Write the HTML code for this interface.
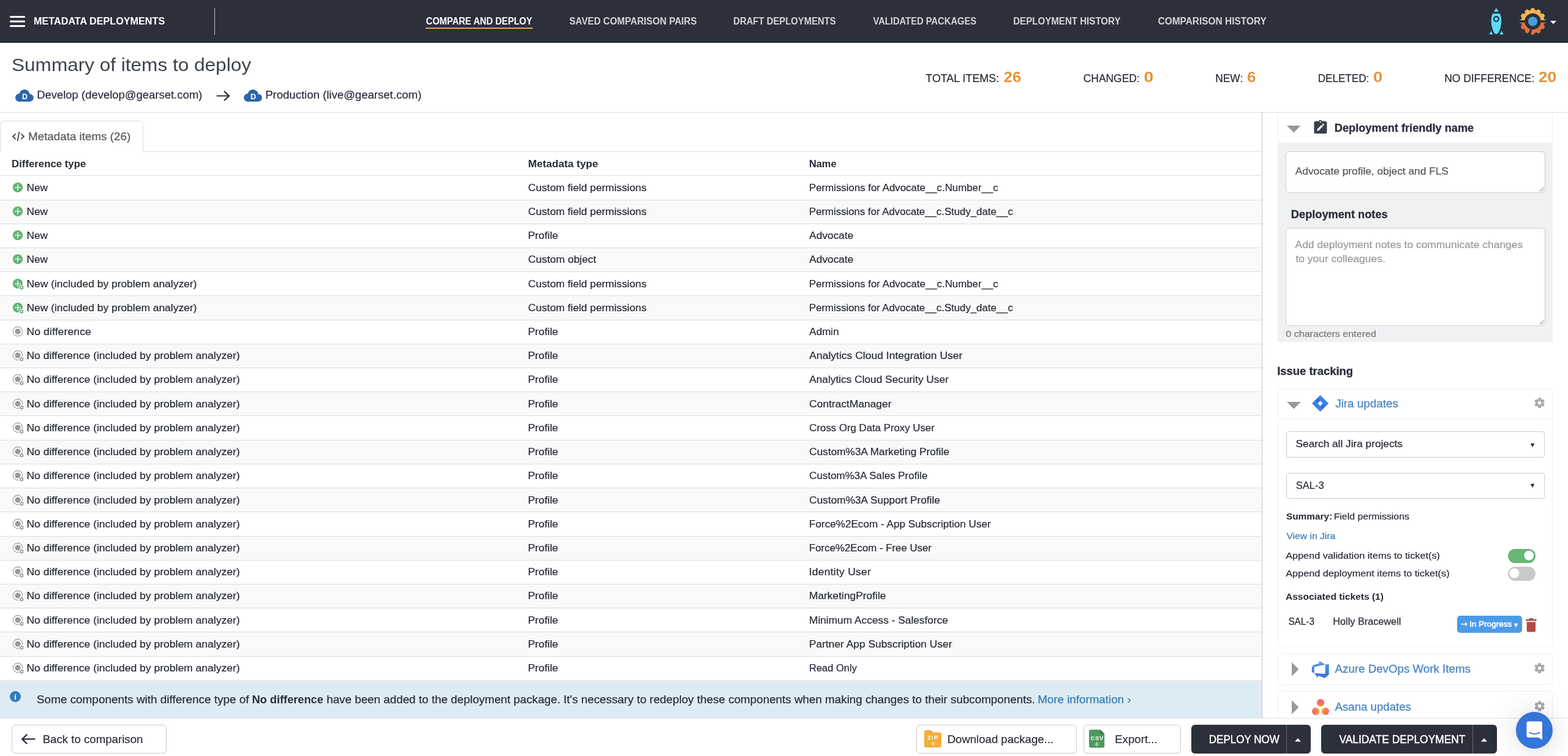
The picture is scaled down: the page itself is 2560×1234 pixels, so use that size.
<!DOCTYPE html>
<html lang="en">
<head>
<meta charset="utf-8">
<title>Summary of items to deploy</title>
<meta name="viewport" content="width=2560">
<style>
*{box-sizing:border-box}
html,body{margin:0;padding:0;background:#fff}
body{width:2560px;height:1234px;color:#262a33;
 font-family:"Liberation Sans",Arial,Helvetica,sans-serif;-webkit-font-smoothing:antialiased}
#app{position:relative;left:0;top:0;width:2560px;height:1234px;overflow:hidden;background:#fff}
nav,header,main,aside,footer,section{position:absolute;left:0;top:0;width:2560px;height:0;will-change:transform}
div,a.t,span.t,h1.t,h2.t,h3.t,p.t,label.t,button{position:absolute}
.t{white-space:nowrap;margin:0;padding:0;font-weight:400;text-decoration:none;color:inherit;transform-origin:0 50%}
.ic{position:absolute;display:block;overflow:visible}
.b{font-weight:700}
.btn{border:1px solid #ccc;border-radius:6px;background:#fff}
.dark{background:#2c303b;border-radius:6px}
.card{border:1px solid #efefef;border-radius:5px;background:#fff}
.field{border:1px solid #ccc;border-radius:6px;background:#fff}
.row{left:0;width:2060px;border-top:1px solid #ddd}
.alt{background:#f9f9f9}
</style>
</head>
<body>
<div id="app">
<main>
<div style="left:234px;top:247px;width:1826px;height:1px;background:#ddd;"></div>
<div style="left:0px;top:197px;width:234px;height:51px;border:1px solid #ddd;border-bottom:0;border-radius:6px 6px 0 0;background:#fff;"></div>
<svg class="ic" style="left:20px;top:215.2px;" width="20" height="16" viewBox="0 0 20 16" aria-hidden="true"><path d="M5.6 3.6 L0.9 7.8 L5.6 12 M11.4 0.2 L8.6 15.4 M14.4 3.6 L19.1 7.8 L14.4 12" fill="none" stroke="#3a3a3a" stroke-width="1.7"/></svg>
<span class="t" style="left:46px;top:212px;font-size:17.5px;line-height:22px;transform:translateX(0.05px) scaleX(1.0737);color:#555;-webkit-text-stroke-width:0.2px;">Metadata items (26)</span>
<span class="t" style="left:19px;top:258px;font-size:16px;line-height:20px;transform:translateX(0.05px) scaleX(1.0482);font-weight:700;color:#262a33;">Difference type</span>
<span class="t" style="left:862px;top:258px;font-size:16px;line-height:20px;transform:translateX(0.23px) scaleX(1.0705);font-weight:700;color:#262a33;">Metadata type</span>
<span class="t" style="left:1320px;top:258px;font-size:16px;line-height:20px;transform:translateX(0.88px) scaleX(1.0237);font-weight:700;color:#262a33;">Name</span>
<div class="row" style="left:0px;top:286px;width:2060px;height:40px;"></div>
<svg class="ic" style="left:20.1px;top:297px;" width="20" height="20" viewBox="0 0 20 20" aria-hidden="true"><circle cx="9" cy="9" r="8.1" fill="#5fb46f"/><path d="M9 4.7 V13.3 M4.7 9 H13.3" stroke="#fff" stroke-opacity="0.88" stroke-width="1.7" stroke-linecap="round"/></svg>
<span class="t" style="left:43px;top:297px;font-size:16px;line-height:20px;transform:translateX(0.47px) scaleX(1.0780);-webkit-text-stroke-width:0.2px;">New</span>
<span class="t" style="left:862px;top:297px;font-size:16px;line-height:20px;transform:translateX(0.32px) scaleX(1.0814);-webkit-text-stroke-width:0.2px;">Custom field permissions</span>
<span class="t" style="left:1321px;top:297px;font-size:16px;line-height:20px;transform:translateX(0.00px) scaleX(1.0519);-webkit-text-stroke-width:0.2px;">Permissions for Advocate__c.Number__c</span>
<div class="row alt" style="left:0px;top:326px;width:2060px;height:39px;"></div>
<svg class="ic" style="left:20.1px;top:336px;" width="20" height="20" viewBox="0 0 20 20" aria-hidden="true"><circle cx="9" cy="9" r="8.1" fill="#5fb46f"/><path d="M9 4.7 V13.3 M4.7 9 H13.3" stroke="#fff" stroke-opacity="0.88" stroke-width="1.7" stroke-linecap="round"/></svg>
<span class="t" style="left:43px;top:336px;font-size:16px;line-height:20px;transform:translateX(0.47px) scaleX(1.0780);-webkit-text-stroke-width:0.2px;">New</span>
<span class="t" style="left:862px;top:336px;font-size:16px;line-height:20px;transform:translateX(0.32px) scaleX(1.0814);-webkit-text-stroke-width:0.2px;">Custom field permissions</span>
<span class="t" style="left:1321px;top:336px;font-size:16px;line-height:20px;transform:translateX(0.01px) scaleX(1.0480);-webkit-text-stroke-width:0.2px;">Permissions for Advocate__c.Study_date__c</span>
<div class="row" style="left:0px;top:365px;width:2060px;height:39px;"></div>
<svg class="ic" style="left:20.1px;top:375px;" width="20" height="20" viewBox="0 0 20 20" aria-hidden="true"><circle cx="9" cy="9" r="8.1" fill="#5fb46f"/><path d="M9 4.7 V13.3 M4.7 9 H13.3" stroke="#fff" stroke-opacity="0.88" stroke-width="1.7" stroke-linecap="round"/></svg>
<span class="t" style="left:43px;top:375px;font-size:16px;line-height:20px;transform:translateX(0.47px) scaleX(1.0780);-webkit-text-stroke-width:0.2px;">New</span>
<span class="t" style="left:861px;top:375px;font-size:16px;line-height:20px;transform:translateX(0.96px) scaleX(1.0858);-webkit-text-stroke-width:0.2px;">Profile</span>
<span class="t" style="left:1321px;top:375px;font-size:16px;line-height:20px;transform:translateX(0.24px) scaleX(1.0805);-webkit-text-stroke-width:0.2px;">Advocate</span>
<div class="row alt" style="left:0px;top:404px;width:2060px;height:39px;"></div>
<svg class="ic" style="left:20.1px;top:414px;" width="20" height="20" viewBox="0 0 20 20" aria-hidden="true"><circle cx="9" cy="9" r="8.1" fill="#5fb46f"/><path d="M9 4.7 V13.3 M4.7 9 H13.3" stroke="#fff" stroke-opacity="0.88" stroke-width="1.7" stroke-linecap="round"/></svg>
<span class="t" style="left:43px;top:414px;font-size:16px;line-height:20px;transform:translateX(0.47px) scaleX(1.0780);-webkit-text-stroke-width:0.2px;">New</span>
<span class="t" style="left:862px;top:414px;font-size:16px;line-height:20px;transform:translateX(0.31px) scaleX(1.0860);-webkit-text-stroke-width:0.2px;">Custom object</span>
<span class="t" style="left:1321px;top:414px;font-size:16px;line-height:20px;transform:translateX(0.24px) scaleX(1.0805);-webkit-text-stroke-width:0.2px;">Advocate</span>
<div class="row" style="left:0px;top:443px;width:2060px;height:39px;"></div>
<svg class="ic" style="left:20.1px;top:454px;" width="20" height="20" viewBox="0 0 20 20" aria-hidden="true"><circle cx="9" cy="9" r="8.1" fill="#5fb46f"/><path d="M9 4.7 V13.3 M4.7 9 H13.3" stroke="#fff" stroke-opacity="0.88" stroke-width="1.7" stroke-linecap="round"/><circle cx="15.2" cy="15.2" r="4.4" fill="#fff"/><path d="M14.40 13.04 L14.47 11.98 L15.93 11.98 L16.00 13.04 L16.67 13.43 L17.62 12.96 L18.35 14.22 L17.47 14.81 L17.47 15.59 L18.35 16.18 L17.62 17.44 L16.67 16.97 L16.00 17.36 L15.93 18.42 L14.47 18.42 L14.40 17.36 L13.73 16.97 L12.78 17.44 L12.05 16.18 L12.93 15.59 L12.93 14.81 L12.05 14.22 L12.78 12.96 L13.73 13.43 Z" fill="#5fb46f" stroke="#5fb46f" stroke-width="0.7" stroke-linejoin="round"/><circle cx="15.2" cy="15.2" r="1.25" fill="#fff"/></svg>
<span class="t" style="left:43px;top:454px;font-size:16px;line-height:20px;transform:translateX(0.45px) scaleX(1.0890);-webkit-text-stroke-width:0.2px;">New (included by problem analyzer)</span>
<span class="t" style="left:862px;top:454px;font-size:16px;line-height:20px;transform:translateX(0.32px) scaleX(1.0814);-webkit-text-stroke-width:0.2px;">Custom field permissions</span>
<span class="t" style="left:1321px;top:454px;font-size:16px;line-height:20px;transform:translateX(0.00px) scaleX(1.0519);-webkit-text-stroke-width:0.2px;">Permissions for Advocate__c.Number__c</span>
<div class="row alt" style="left:0px;top:482px;width:2060px;height:40px;"></div>
<svg class="ic" style="left:20.1px;top:493px;" width="20" height="20" viewBox="0 0 20 20" aria-hidden="true"><circle cx="9" cy="9" r="8.1" fill="#5fb46f"/><path d="M9 4.7 V13.3 M4.7 9 H13.3" stroke="#fff" stroke-opacity="0.88" stroke-width="1.7" stroke-linecap="round"/><circle cx="15.2" cy="15.2" r="4.4" fill="#fff"/><path d="M14.40 13.04 L14.47 11.98 L15.93 11.98 L16.00 13.04 L16.67 13.43 L17.62 12.96 L18.35 14.22 L17.47 14.81 L17.47 15.59 L18.35 16.18 L17.62 17.44 L16.67 16.97 L16.00 17.36 L15.93 18.42 L14.47 18.42 L14.40 17.36 L13.73 16.97 L12.78 17.44 L12.05 16.18 L12.93 15.59 L12.93 14.81 L12.05 14.22 L12.78 12.96 L13.73 13.43 Z" fill="#5fb46f" stroke="#5fb46f" stroke-width="0.7" stroke-linejoin="round"/><circle cx="15.2" cy="15.2" r="1.25" fill="#fff"/></svg>
<span class="t" style="left:43px;top:493px;font-size:16px;line-height:20px;transform:translateX(0.45px) scaleX(1.0890);-webkit-text-stroke-width:0.2px;">New (included by problem analyzer)</span>
<span class="t" style="left:862px;top:493px;font-size:16px;line-height:20px;transform:translateX(0.32px) scaleX(1.0814);-webkit-text-stroke-width:0.2px;">Custom field permissions</span>
<span class="t" style="left:1321px;top:493px;font-size:16px;line-height:20px;transform:translateX(0.01px) scaleX(1.0480);-webkit-text-stroke-width:0.2px;">Permissions for Advocate__c.Study_date__c</span>
<div class="row" style="left:0px;top:522px;width:2060px;height:39px;"></div>
<svg class="ic" style="left:20.1px;top:532px;" width="20" height="20" viewBox="0 0 20 20" aria-hidden="true"><circle cx="9" cy="9" r="7.6" fill="#fff" stroke="#9a9a9a" stroke-width="1.1"/><circle cx="9" cy="9" r="4.6" fill="#9a9a9a"/></svg>
<span class="t" style="left:43px;top:532px;font-size:16px;line-height:20px;letter-spacing:0.080px;transform:translateX(0.44px) scaleX(1.1000);-webkit-text-stroke-width:0.2px;">No difference</span>
<span class="t" style="left:861px;top:532px;font-size:16px;line-height:20px;transform:translateX(0.96px) scaleX(1.0858);-webkit-text-stroke-width:0.2px;">Profile</span>
<span class="t" style="left:1321px;top:532px;font-size:16px;line-height:20px;transform:translateX(0.24px) scaleX(1.0677);-webkit-text-stroke-width:0.2px;">Admin</span>
<div class="row alt" style="left:0px;top:561px;width:2060px;height:39px;"></div>
<svg class="ic" style="left:20.1px;top:571px;" width="20" height="20" viewBox="0 0 20 20" aria-hidden="true"><circle cx="9" cy="9" r="7.6" fill="#fff" stroke="#9a9a9a" stroke-width="1.1"/><circle cx="9" cy="9" r="4.6" fill="#9a9a9a"/><circle cx="15.2" cy="15.2" r="4.4" fill="#fff"/><path d="M14.40 13.04 L14.47 11.98 L15.93 11.98 L16.00 13.04 L16.67 13.43 L17.62 12.96 L18.35 14.22 L17.47 14.81 L17.47 15.59 L18.35 16.18 L17.62 17.44 L16.67 16.97 L16.00 17.36 L15.93 18.42 L14.47 18.42 L14.40 17.36 L13.73 16.97 L12.78 17.44 L12.05 16.18 L12.93 15.59 L12.93 14.81 L12.05 14.22 L12.78 12.96 L13.73 13.43 Z" fill="#9a9a9a" stroke="#9a9a9a" stroke-width="0.7" stroke-linejoin="round"/><circle cx="15.2" cy="15.2" r="1.25" fill="#fff"/></svg>
<span class="t" style="left:43px;top:571px;font-size:16px;line-height:20px;transform:translateX(0.44px) scaleX(1.0945);-webkit-text-stroke-width:0.2px;">No difference (included by problem analyzer)</span>
<span class="t" style="left:861px;top:571px;font-size:16px;line-height:20px;transform:translateX(0.96px) scaleX(1.0858);-webkit-text-stroke-width:0.2px;">Profile</span>
<span class="t" style="left:1321px;top:571px;font-size:16px;line-height:20px;transform:translateX(0.23px) scaleX(1.0944);-webkit-text-stroke-width:0.2px;">Analytics Cloud Integration User</span>
<div class="row" style="left:0px;top:600px;width:2060px;height:39px;"></div>
<svg class="ic" style="left:20.1px;top:610px;" width="20" height="20" viewBox="0 0 20 20" aria-hidden="true"><circle cx="9" cy="9" r="7.6" fill="#fff" stroke="#9a9a9a" stroke-width="1.1"/><circle cx="9" cy="9" r="4.6" fill="#9a9a9a"/><circle cx="15.2" cy="15.2" r="4.4" fill="#fff"/><path d="M14.40 13.04 L14.47 11.98 L15.93 11.98 L16.00 13.04 L16.67 13.43 L17.62 12.96 L18.35 14.22 L17.47 14.81 L17.47 15.59 L18.35 16.18 L17.62 17.44 L16.67 16.97 L16.00 17.36 L15.93 18.42 L14.47 18.42 L14.40 17.36 L13.73 16.97 L12.78 17.44 L12.05 16.18 L12.93 15.59 L12.93 14.81 L12.05 14.22 L12.78 12.96 L13.73 13.43 Z" fill="#9a9a9a" stroke="#9a9a9a" stroke-width="0.7" stroke-linejoin="round"/><circle cx="15.2" cy="15.2" r="1.25" fill="#fff"/></svg>
<span class="t" style="left:43px;top:610px;font-size:16px;line-height:20px;transform:translateX(0.44px) scaleX(1.0945);-webkit-text-stroke-width:0.2px;">No difference (included by problem analyzer)</span>
<span class="t" style="left:861px;top:610px;font-size:16px;line-height:20px;transform:translateX(0.96px) scaleX(1.0858);-webkit-text-stroke-width:0.2px;">Profile</span>
<span class="t" style="left:1321px;top:610px;font-size:16px;line-height:20px;transform:translateX(0.24px) scaleX(1.0798);-webkit-text-stroke-width:0.2px;">Analytics Cloud Security User</span>
<div class="row alt" style="left:0px;top:639px;width:2060px;height:39px;"></div>
<svg class="ic" style="left:20.1px;top:650px;" width="20" height="20" viewBox="0 0 20 20" aria-hidden="true"><circle cx="9" cy="9" r="7.6" fill="#fff" stroke="#9a9a9a" stroke-width="1.1"/><circle cx="9" cy="9" r="4.6" fill="#9a9a9a"/><circle cx="15.2" cy="15.2" r="4.4" fill="#fff"/><path d="M14.40 13.04 L14.47 11.98 L15.93 11.98 L16.00 13.04 L16.67 13.43 L17.62 12.96 L18.35 14.22 L17.47 14.81 L17.47 15.59 L18.35 16.18 L17.62 17.44 L16.67 16.97 L16.00 17.36 L15.93 18.42 L14.47 18.42 L14.40 17.36 L13.73 16.97 L12.78 17.44 L12.05 16.18 L12.93 15.59 L12.93 14.81 L12.05 14.22 L12.78 12.96 L13.73 13.43 Z" fill="#9a9a9a" stroke="#9a9a9a" stroke-width="0.7" stroke-linejoin="round"/><circle cx="15.2" cy="15.2" r="1.25" fill="#fff"/></svg>
<span class="t" style="left:43px;top:650px;font-size:16px;line-height:20px;transform:translateX(0.44px) scaleX(1.0945);-webkit-text-stroke-width:0.2px;">No difference (included by problem analyzer)</span>
<span class="t" style="left:861px;top:650px;font-size:16px;line-height:20px;transform:translateX(0.96px) scaleX(1.0858);-webkit-text-stroke-width:0.2px;">Profile</span>
<span class="t" style="left:1321px;top:650px;font-size:16px;line-height:20px;transform:translateX(0.32px) scaleX(1.0849);-webkit-text-stroke-width:0.2px;">ContractManager</span>
<div class="row" style="left:0px;top:678px;width:2060px;height:40px;"></div>
<svg class="ic" style="left:20.1px;top:689px;" width="20" height="20" viewBox="0 0 20 20" aria-hidden="true"><circle cx="9" cy="9" r="7.6" fill="#fff" stroke="#9a9a9a" stroke-width="1.1"/><circle cx="9" cy="9" r="4.6" fill="#9a9a9a"/><circle cx="15.2" cy="15.2" r="4.4" fill="#fff"/><path d="M14.40 13.04 L14.47 11.98 L15.93 11.98 L16.00 13.04 L16.67 13.43 L17.62 12.96 L18.35 14.22 L17.47 14.81 L17.47 15.59 L18.35 16.18 L17.62 17.44 L16.67 16.97 L16.00 17.36 L15.93 18.42 L14.47 18.42 L14.40 17.36 L13.73 16.97 L12.78 17.44 L12.05 16.18 L12.93 15.59 L12.93 14.81 L12.05 14.22 L12.78 12.96 L13.73 13.43 Z" fill="#9a9a9a" stroke="#9a9a9a" stroke-width="0.7" stroke-linejoin="round"/><circle cx="15.2" cy="15.2" r="1.25" fill="#fff"/></svg>
<span class="t" style="left:43px;top:689px;font-size:16px;line-height:20px;transform:translateX(0.44px) scaleX(1.0945);-webkit-text-stroke-width:0.2px;">No difference (included by problem analyzer)</span>
<span class="t" style="left:861px;top:689px;font-size:16px;line-height:20px;transform:translateX(0.96px) scaleX(1.0858);-webkit-text-stroke-width:0.2px;">Profile</span>
<span class="t" style="left:1321px;top:689px;font-size:16px;line-height:20px;transform:translateX(0.35px) scaleX(1.0498);-webkit-text-stroke-width:0.2px;">Cross Org Data Proxy User</span>
<div class="row alt" style="left:0px;top:718px;width:2060px;height:39px;"></div>
<svg class="ic" style="left:20.1px;top:728px;" width="20" height="20" viewBox="0 0 20 20" aria-hidden="true"><circle cx="9" cy="9" r="7.6" fill="#fff" stroke="#9a9a9a" stroke-width="1.1"/><circle cx="9" cy="9" r="4.6" fill="#9a9a9a"/><circle cx="15.2" cy="15.2" r="4.4" fill="#fff"/><path d="M14.40 13.04 L14.47 11.98 L15.93 11.98 L16.00 13.04 L16.67 13.43 L17.62 12.96 L18.35 14.22 L17.47 14.81 L17.47 15.59 L18.35 16.18 L17.62 17.44 L16.67 16.97 L16.00 17.36 L15.93 18.42 L14.47 18.42 L14.40 17.36 L13.73 16.97 L12.78 17.44 L12.05 16.18 L12.93 15.59 L12.93 14.81 L12.05 14.22 L12.78 12.96 L13.73 13.43 Z" fill="#9a9a9a" stroke="#9a9a9a" stroke-width="0.7" stroke-linejoin="round"/><circle cx="15.2" cy="15.2" r="1.25" fill="#fff"/></svg>
<span class="t" style="left:43px;top:728px;font-size:16px;line-height:20px;transform:translateX(0.44px) scaleX(1.0945);-webkit-text-stroke-width:0.2px;">No difference (included by problem analyzer)</span>
<span class="t" style="left:861px;top:728px;font-size:16px;line-height:20px;transform:translateX(0.96px) scaleX(1.0858);-webkit-text-stroke-width:0.2px;">Profile</span>
<span class="t" style="left:1321px;top:728px;font-size:16px;line-height:20px;transform:translateX(0.32px) scaleX(1.0751);-webkit-text-stroke-width:0.2px;">Custom%3A Marketing Profile</span>
<div class="row" style="left:0px;top:757px;width:2060px;height:39px;"></div>
<svg class="ic" style="left:20.1px;top:767px;" width="20" height="20" viewBox="0 0 20 20" aria-hidden="true"><circle cx="9" cy="9" r="7.6" fill="#fff" stroke="#9a9a9a" stroke-width="1.1"/><circle cx="9" cy="9" r="4.6" fill="#9a9a9a"/><circle cx="15.2" cy="15.2" r="4.4" fill="#fff"/><path d="M14.40 13.04 L14.47 11.98 L15.93 11.98 L16.00 13.04 L16.67 13.43 L17.62 12.96 L18.35 14.22 L17.47 14.81 L17.47 15.59 L18.35 16.18 L17.62 17.44 L16.67 16.97 L16.00 17.36 L15.93 18.42 L14.47 18.42 L14.40 17.36 L13.73 16.97 L12.78 17.44 L12.05 16.18 L12.93 15.59 L12.93 14.81 L12.05 14.22 L12.78 12.96 L13.73 13.43 Z" fill="#9a9a9a" stroke="#9a9a9a" stroke-width="0.7" stroke-linejoin="round"/><circle cx="15.2" cy="15.2" r="1.25" fill="#fff"/></svg>
<span class="t" style="left:43px;top:767px;font-size:16px;line-height:20px;transform:translateX(0.44px) scaleX(1.0945);-webkit-text-stroke-width:0.2px;">No difference (included by problem analyzer)</span>
<span class="t" style="left:861px;top:767px;font-size:16px;line-height:20px;transform:translateX(0.96px) scaleX(1.0858);-webkit-text-stroke-width:0.2px;">Profile</span>
<span class="t" style="left:1321px;top:767px;font-size:16px;line-height:20px;transform:translateX(0.34px) scaleX(1.0586);-webkit-text-stroke-width:0.2px;">Custom%3A Sales Profile</span>
<div class="row alt" style="left:0px;top:796px;width:2060px;height:39px;"></div>
<svg class="ic" style="left:20.1px;top:807px;" width="20" height="20" viewBox="0 0 20 20" aria-hidden="true"><circle cx="9" cy="9" r="7.6" fill="#fff" stroke="#9a9a9a" stroke-width="1.1"/><circle cx="9" cy="9" r="4.6" fill="#9a9a9a"/><circle cx="15.2" cy="15.2" r="4.4" fill="#fff"/><path d="M14.40 13.04 L14.47 11.98 L15.93 11.98 L16.00 13.04 L16.67 13.43 L17.62 12.96 L18.35 14.22 L17.47 14.81 L17.47 15.59 L18.35 16.18 L17.62 17.44 L16.67 16.97 L16.00 17.36 L15.93 18.42 L14.47 18.42 L14.40 17.36 L13.73 16.97 L12.78 17.44 L12.05 16.18 L12.93 15.59 L12.93 14.81 L12.05 14.22 L12.78 12.96 L13.73 13.43 Z" fill="#9a9a9a" stroke="#9a9a9a" stroke-width="0.7" stroke-linejoin="round"/><circle cx="15.2" cy="15.2" r="1.25" fill="#fff"/></svg>
<span class="t" style="left:43px;top:807px;font-size:16px;line-height:20px;transform:translateX(0.44px) scaleX(1.0945);-webkit-text-stroke-width:0.2px;">No difference (included by problem analyzer)</span>
<span class="t" style="left:861px;top:807px;font-size:16px;line-height:20px;transform:translateX(0.96px) scaleX(1.0858);-webkit-text-stroke-width:0.2px;">Profile</span>
<span class="t" style="left:1321px;top:807px;font-size:16px;line-height:20px;transform:translateX(0.32px) scaleX(1.0767);-webkit-text-stroke-width:0.2px;">Custom%3A Support Profile</span>
<div class="row" style="left:0px;top:835px;width:2060px;height:40px;"></div>
<svg class="ic" style="left:20.1px;top:846px;" width="20" height="20" viewBox="0 0 20 20" aria-hidden="true"><circle cx="9" cy="9" r="7.6" fill="#fff" stroke="#9a9a9a" stroke-width="1.1"/><circle cx="9" cy="9" r="4.6" fill="#9a9a9a"/><circle cx="15.2" cy="15.2" r="4.4" fill="#fff"/><path d="M14.40 13.04 L14.47 11.98 L15.93 11.98 L16.00 13.04 L16.67 13.43 L17.62 12.96 L18.35 14.22 L17.47 14.81 L17.47 15.59 L18.35 16.18 L17.62 17.44 L16.67 16.97 L16.00 17.36 L15.93 18.42 L14.47 18.42 L14.40 17.36 L13.73 16.97 L12.78 17.44 L12.05 16.18 L12.93 15.59 L12.93 14.81 L12.05 14.22 L12.78 12.96 L13.73 13.43 Z" fill="#9a9a9a" stroke="#9a9a9a" stroke-width="0.7" stroke-linejoin="round"/><circle cx="15.2" cy="15.2" r="1.25" fill="#fff"/></svg>
<span class="t" style="left:43px;top:846px;font-size:16px;line-height:20px;transform:translateX(0.44px) scaleX(1.0945);-webkit-text-stroke-width:0.2px;">No difference (included by problem analyzer)</span>
<span class="t" style="left:861px;top:846px;font-size:16px;line-height:20px;transform:translateX(0.96px) scaleX(1.0858);-webkit-text-stroke-width:0.2px;">Profile</span>
<span class="t" style="left:1320px;top:846px;font-size:16px;line-height:20px;transform:translateX(0.98px) scaleX(1.0696);-webkit-text-stroke-width:0.2px;">Force%2Ecom - App Subscription User</span>
<div class="row alt" style="left:0px;top:875px;width:2060px;height:39px;"></div>
<svg class="ic" style="left:20.1px;top:885px;" width="20" height="20" viewBox="0 0 20 20" aria-hidden="true"><circle cx="9" cy="9" r="7.6" fill="#fff" stroke="#9a9a9a" stroke-width="1.1"/><circle cx="9" cy="9" r="4.6" fill="#9a9a9a"/><circle cx="15.2" cy="15.2" r="4.4" fill="#fff"/><path d="M14.40 13.04 L14.47 11.98 L15.93 11.98 L16.00 13.04 L16.67 13.43 L17.62 12.96 L18.35 14.22 L17.47 14.81 L17.47 15.59 L18.35 16.18 L17.62 17.44 L16.67 16.97 L16.00 17.36 L15.93 18.42 L14.47 18.42 L14.40 17.36 L13.73 16.97 L12.78 17.44 L12.05 16.18 L12.93 15.59 L12.93 14.81 L12.05 14.22 L12.78 12.96 L13.73 13.43 Z" fill="#9a9a9a" stroke="#9a9a9a" stroke-width="0.7" stroke-linejoin="round"/><circle cx="15.2" cy="15.2" r="1.25" fill="#fff"/></svg>
<span class="t" style="left:43px;top:885px;font-size:16px;line-height:20px;transform:translateX(0.44px) scaleX(1.0945);-webkit-text-stroke-width:0.2px;">No difference (included by problem analyzer)</span>
<span class="t" style="left:861px;top:885px;font-size:16px;line-height:20px;transform:translateX(0.96px) scaleX(1.0858);-webkit-text-stroke-width:0.2px;">Profile</span>
<span class="t" style="left:1321px;top:885px;font-size:16px;line-height:20px;transform:translateX(0.00px) scaleX(1.0508);-webkit-text-stroke-width:0.2px;">Force%2Ecom - Free User</span>
<div class="row" style="left:0px;top:914px;width:2060px;height:39px;"></div>
<svg class="ic" style="left:20.1px;top:924px;" width="20" height="20" viewBox="0 0 20 20" aria-hidden="true"><circle cx="9" cy="9" r="7.6" fill="#fff" stroke="#9a9a9a" stroke-width="1.1"/><circle cx="9" cy="9" r="4.6" fill="#9a9a9a"/><circle cx="15.2" cy="15.2" r="4.4" fill="#fff"/><path d="M14.40 13.04 L14.47 11.98 L15.93 11.98 L16.00 13.04 L16.67 13.43 L17.62 12.96 L18.35 14.22 L17.47 14.81 L17.47 15.59 L18.35 16.18 L17.62 17.44 L16.67 16.97 L16.00 17.36 L15.93 18.42 L14.47 18.42 L14.40 17.36 L13.73 16.97 L12.78 17.44 L12.05 16.18 L12.93 15.59 L12.93 14.81 L12.05 14.22 L12.78 12.96 L13.73 13.43 Z" fill="#9a9a9a" stroke="#9a9a9a" stroke-width="0.7" stroke-linejoin="round"/><circle cx="15.2" cy="15.2" r="1.25" fill="#fff"/></svg>
<span class="t" style="left:43px;top:924px;font-size:16px;line-height:20px;transform:translateX(0.44px) scaleX(1.0945);-webkit-text-stroke-width:0.2px;">No difference (included by problem analyzer)</span>
<span class="t" style="left:861px;top:924px;font-size:16px;line-height:20px;transform:translateX(0.96px) scaleX(1.0858);-webkit-text-stroke-width:0.2px;">Profile</span>
<span class="t" style="left:1320px;top:924px;font-size:16px;line-height:20px;letter-spacing:0.177px;transform:translateX(0.75px) scaleX(1.1000);-webkit-text-stroke-width:0.2px;">Identity User</span>
<div class="row alt" style="left:0px;top:953px;width:2060px;height:39px;"></div>
<svg class="ic" style="left:20.1px;top:963px;" width="20" height="20" viewBox="0 0 20 20" aria-hidden="true"><circle cx="9" cy="9" r="7.6" fill="#fff" stroke="#9a9a9a" stroke-width="1.1"/><circle cx="9" cy="9" r="4.6" fill="#9a9a9a"/><circle cx="15.2" cy="15.2" r="4.4" fill="#fff"/><path d="M14.40 13.04 L14.47 11.98 L15.93 11.98 L16.00 13.04 L16.67 13.43 L17.62 12.96 L18.35 14.22 L17.47 14.81 L17.47 15.59 L18.35 16.18 L17.62 17.44 L16.67 16.97 L16.00 17.36 L15.93 18.42 L14.47 18.42 L14.40 17.36 L13.73 16.97 L12.78 17.44 L12.05 16.18 L12.93 15.59 L12.93 14.81 L12.05 14.22 L12.78 12.96 L13.73 13.43 Z" fill="#9a9a9a" stroke="#9a9a9a" stroke-width="0.7" stroke-linejoin="round"/><circle cx="15.2" cy="15.2" r="1.25" fill="#fff"/></svg>
<span class="t" style="left:43px;top:963px;font-size:16px;line-height:20px;transform:translateX(0.44px) scaleX(1.0945);-webkit-text-stroke-width:0.2px;">No difference (included by problem analyzer)</span>
<span class="t" style="left:861px;top:963px;font-size:16px;line-height:20px;transform:translateX(0.96px) scaleX(1.0858);-webkit-text-stroke-width:0.2px;">Profile</span>
<span class="t" style="left:1320px;top:963px;font-size:16px;line-height:20px;transform:translateX(0.96px) scaleX(1.0852);-webkit-text-stroke-width:0.2px;">MarketingProfile</span>
<div class="row" style="left:0px;top:992px;width:2060px;height:39px;"></div>
<svg class="ic" style="left:20.1px;top:1003px;" width="20" height="20" viewBox="0 0 20 20" aria-hidden="true"><circle cx="9" cy="9" r="7.6" fill="#fff" stroke="#9a9a9a" stroke-width="1.1"/><circle cx="9" cy="9" r="4.6" fill="#9a9a9a"/><circle cx="15.2" cy="15.2" r="4.4" fill="#fff"/><path d="M14.40 13.04 L14.47 11.98 L15.93 11.98 L16.00 13.04 L16.67 13.43 L17.62 12.96 L18.35 14.22 L17.47 14.81 L17.47 15.59 L18.35 16.18 L17.62 17.44 L16.67 16.97 L16.00 17.36 L15.93 18.42 L14.47 18.42 L14.40 17.36 L13.73 16.97 L12.78 17.44 L12.05 16.18 L12.93 15.59 L12.93 14.81 L12.05 14.22 L12.78 12.96 L13.73 13.43 Z" fill="#9a9a9a" stroke="#9a9a9a" stroke-width="0.7" stroke-linejoin="round"/><circle cx="15.2" cy="15.2" r="1.25" fill="#fff"/></svg>
<span class="t" style="left:43px;top:1003px;font-size:16px;line-height:20px;transform:translateX(0.44px) scaleX(1.0945);-webkit-text-stroke-width:0.2px;">No difference (included by problem analyzer)</span>
<span class="t" style="left:861px;top:1003px;font-size:16px;line-height:20px;transform:translateX(0.96px) scaleX(1.0858);-webkit-text-stroke-width:0.2px;">Profile</span>
<span class="t" style="left:1320px;top:1003px;font-size:16px;line-height:20px;transform:translateX(0.96px) scaleX(1.0820);-webkit-text-stroke-width:0.2px;">Minimum Access - Salesforce</span>
<div class="row alt" style="left:0px;top:1031px;width:2060px;height:40px;"></div>
<svg class="ic" style="left:20.1px;top:1042px;" width="20" height="20" viewBox="0 0 20 20" aria-hidden="true"><circle cx="9" cy="9" r="7.6" fill="#fff" stroke="#9a9a9a" stroke-width="1.1"/><circle cx="9" cy="9" r="4.6" fill="#9a9a9a"/><circle cx="15.2" cy="15.2" r="4.4" fill="#fff"/><path d="M14.40 13.04 L14.47 11.98 L15.93 11.98 L16.00 13.04 L16.67 13.43 L17.62 12.96 L18.35 14.22 L17.47 14.81 L17.47 15.59 L18.35 16.18 L17.62 17.44 L16.67 16.97 L16.00 17.36 L15.93 18.42 L14.47 18.42 L14.40 17.36 L13.73 16.97 L12.78 17.44 L12.05 16.18 L12.93 15.59 L12.93 14.81 L12.05 14.22 L12.78 12.96 L13.73 13.43 Z" fill="#9a9a9a" stroke="#9a9a9a" stroke-width="0.7" stroke-linejoin="round"/><circle cx="15.2" cy="15.2" r="1.25" fill="#fff"/></svg>
<span class="t" style="left:43px;top:1042px;font-size:16px;line-height:20px;transform:translateX(0.44px) scaleX(1.0945);-webkit-text-stroke-width:0.2px;">No difference (included by problem analyzer)</span>
<span class="t" style="left:861px;top:1042px;font-size:16px;line-height:20px;transform:translateX(0.96px) scaleX(1.0858);-webkit-text-stroke-width:0.2px;">Profile</span>
<span class="t" style="left:1320px;top:1042px;font-size:16px;line-height:20px;transform:translateX(0.96px) scaleX(1.0847);-webkit-text-stroke-width:0.2px;">Partner App Subscription User</span>
<div class="row" style="left:0px;top:1071px;width:2060px;height:39px;"></div>
<svg class="ic" style="left:20.1px;top:1081px;" width="20" height="20" viewBox="0 0 20 20" aria-hidden="true"><circle cx="9" cy="9" r="7.6" fill="#fff" stroke="#9a9a9a" stroke-width="1.1"/><circle cx="9" cy="9" r="4.6" fill="#9a9a9a"/><circle cx="15.2" cy="15.2" r="4.4" fill="#fff"/><path d="M14.40 13.04 L14.47 11.98 L15.93 11.98 L16.00 13.04 L16.67 13.43 L17.62 12.96 L18.35 14.22 L17.47 14.81 L17.47 15.59 L18.35 16.18 L17.62 17.44 L16.67 16.97 L16.00 17.36 L15.93 18.42 L14.47 18.42 L14.40 17.36 L13.73 16.97 L12.78 17.44 L12.05 16.18 L12.93 15.59 L12.93 14.81 L12.05 14.22 L12.78 12.96 L13.73 13.43 Z" fill="#9a9a9a" stroke="#9a9a9a" stroke-width="0.7" stroke-linejoin="round"/><circle cx="15.2" cy="15.2" r="1.25" fill="#fff"/></svg>
<span class="t" style="left:43px;top:1081px;font-size:16px;line-height:20px;transform:translateX(0.44px) scaleX(1.0945);-webkit-text-stroke-width:0.2px;">No difference (included by problem analyzer)</span>
<span class="t" style="left:861px;top:1081px;font-size:16px;line-height:20px;transform:translateX(0.96px) scaleX(1.0858);-webkit-text-stroke-width:0.2px;">Profile</span>
<span class="t" style="left:1321px;top:1081px;font-size:16px;line-height:20px;transform:translateX(0.03px) scaleX(1.0304);-webkit-text-stroke-width:0.2px;">Read Only</span>
<div style="left:0px;top:1110px;width:2060px;height:1px;background:#ddd;"></div>
<div style="left:0px;top:1111px;width:2060px;height:1px;background:#f3f8fb;"></div>
<div style="left:0px;top:1112px;width:2060px;height:60.5px;background:#ddebf4;"></div>
<svg class="ic" style="left:16px;top:1128px;" width="18" height="18" viewBox="0 0 18 18" aria-hidden="true"><circle cx="9" cy="9" r="9" fill="#2f7dbf"/><text x="9" y="13.6" text-anchor="middle" font-family="Liberation Sans, sans-serif" font-weight="700" font-size="13" fill="#fff">i</text></svg>
<span class="t" style="left:60px;top:1131px;font-size:18px;line-height:22px;transform:translateX(0.01px) scaleX(1.0503);color:#262a33;-webkit-text-stroke-width:0.2px;">Some components with difference type of</span>
<span class="t" style="left:411px;top:1131px;font-size:18px;line-height:22px;transform:translateX(0.46px) scaleX(1.0121);font-weight:700;color:#2b2e3a;">No difference</span>
<span class="t" style="left:533px;top:1131px;font-size:18px;line-height:22px;transform:translateX(0.18px) scaleX(1.0449);color:#262a33;-webkit-text-stroke-width:0.2px;">have been added to the deployment package. It's necessary to redeploy these components when making changes to their subcomponents.</span>
<a class="t" style="left:1694px;top:1131px;font-size:18px;line-height:22px;transform:translateX(0.14px) scaleX(1.0432);color:#337ab7;-webkit-text-stroke-width:0.2px;">More information ›</a>
</main>
<aside>
<div style="left:2060px;top:184px;width:1px;height:988px;background:#c6c6c6;"></div>
<div class="card" style="left:2086px;top:176px;width:449px;height:58px;"></div>
<div style="left:2086px;top:233px;width:449px;height:324.5px;background:#f0f1f3;"></div>
<svg class="ic" style="left:2101px;top:205.3px;" width="22.6" height="11.4" viewBox="0 0 22.6 11.4" aria-hidden="true"><path d="M0 0 L22.6 0 L11.3 11.4 Z" fill="#999"/></svg>
<svg class="ic" style="left:2145.2px;top:196.2px;" width="21.4" height="22" viewBox="0 0 21.4 22" aria-hidden="true"><rect x="0.4" y="2" width="21" height="20" rx="2.6" fill="#3a3f4a"/><circle cx="10.7" cy="3" r="2.9" fill="#3a3f4a"/><circle cx="10.7" cy="3.1" r="1.1" fill="#fff"/><path d="M5.2 17.6 L5.6 14.9 L12.7 7.8 L15 10.1 L7.9 17.2 Z M13.5 7 L14.5 6 Q15.1 5.4 15.7 6 L16.8 7.1 Q17.4 7.7 16.8 8.3 L15.8 9.3 Z" fill="#fff"/></svg>
<h2 class="t" style="left:2178px;top:198px;font-size:18px;line-height:22px;transform:translateX(0.86px) scaleX(1.0102);font-weight:700;color:#2b2e3a;-webkit-text-stroke-width:0.3px;">Deployment friendly name</h2>
<div class="field" style="left:2099px;top:247px;width:424px;height:68px;"></div>
<span class="t" style="left:2114px;top:269px;font-size:17px;line-height:21px;transform:translateX(0.74px) scaleX(1.0182);color:#555;-webkit-text-stroke-width:0.2px;">Advocate profile, object and FLS</span>
<svg class="ic" style="left:2512px;top:304px;" width="9" height="9" viewBox="0 0 9 9" aria-hidden="true"><path d="M8.5 1.5 L1.5 8.5 M8.5 5.5 L5.5 8.5" stroke="#777" stroke-width="1" fill="none"/></svg>
<h2 class="t" style="left:2107px;top:339px;font-size:18px;line-height:22px;transform:translateX(0.86px) scaleX(1.0112);font-weight:700;color:#2b2e3a;-webkit-text-stroke-width:0.3px;">Deployment notes</h2>
<div class="field" style="left:2099px;top:372px;width:424px;height:160px;"></div>
<span class="t" style="left:2114px;top:389px;font-size:17px;line-height:21px;transform:translateX(0.54px) scaleX(1.0241);color:#999;-webkit-text-stroke-width:0.2px;">Add deployment notes to communicate changes</span>
<span class="t" style="left:2115px;top:412px;font-size:17px;line-height:21px;transform:translateX(0.43px) scaleX(1.0255);color:#999;-webkit-text-stroke-width:0.2px;">to your colleagues.</span>
<svg class="ic" style="left:2512px;top:521px;" width="9" height="9" viewBox="0 0 9 9" aria-hidden="true"><path d="M8.5 1.5 L1.5 8.5 M8.5 5.5 L5.5 8.5" stroke="#777" stroke-width="1" fill="none"/></svg>
<span class="t" style="left:2099px;top:535px;font-size:15px;line-height:19px;transform:translateX(0.21px) scaleX(1.0741);color:#777;-webkit-text-stroke-width:0.2px;">0 characters entered</span>
<h2 class="t" style="left:2085px;top:595px;font-size:18px;line-height:22px;transform:translateX(0.14px) scaleX(1.0243);font-weight:700;color:#2b2e3a;-webkit-text-stroke-width:0.3px;">Issue tracking</h2>
<div style="left:2086px;top:685px;width:449px;height:371px;border:1px solid #efefef;border-top:0;border-radius:0 0 5px 5px;"></div>
<div class="card" style="left:2086px;top:633.5px;width:449px;height:51.5px;"></div>
<svg class="ic" style="left:2100.6px;top:655.8px;" width="22.6" height="11.4" viewBox="0 0 22.6 11.4" aria-hidden="true"><path d="M0 0 L22.6 0 L11.3 11.4 Z" fill="#999"/></svg>
<svg class="ic" style="left:2142.2px;top:645.1px;" width="27" height="27" viewBox="0 0 27 27" aria-hidden="true"><defs><linearGradient id="jg1" x1="0" y1="0" x2="1" y2="1"><stop offset="0" stop-color="#2456c6"/><stop offset="1" stop-color="#3a80ea"/></linearGradient></defs><path d="M13.5 0 L27 13.5 L13.5 27 L0 13.5 Z" fill="#3a80ea"/><path d="M13.5 0 L9.2 4.3 Q13 9 13.5 9.4 L9.4 13.5 L13.5 17.6 L17.8 22.7 L13.5 27 L22 18.5 Q18 14 17.6 13.5 L13.5 9.4 Z" fill="url(#jg1)" opacity="0.0"/><path d="M9.4 4.1 L13.5 9.2 L9.3 13.5 L5.2 8.4 Z" fill="#2a62cf" opacity="0.55"/><path d="M17.6 22.9 L13.5 17.8 L17.7 13.5 L21.8 18.6 Z" fill="#2a62cf" opacity="0.55"/><path d="M13.5 9.3 L17.7 13.5 L13.5 17.7 L9.3 13.5 Z" fill="#fff"/></svg>
<a class="t" style="left:2180px;top:648px;font-size:18px;line-height:22px;transform:translateX(0.25px) scaleX(1.0460);color:#4a86c8;-webkit-text-stroke-width:0.3px;">Jira updates</a>
<svg class="ic" style="left:2504.7px;top:648.8px;" width="17.2" height="17.2" viewBox="0 0 17.2 17.2" aria-hidden="true"><path d="M6.66 3.35 L6.86 0.89 L10.34 0.89 L10.54 3.35 L12.18 4.29 L14.40 3.24 L16.14 6.26 L14.12 7.65 L14.12 9.55 L16.14 10.94 L14.40 13.96 L12.18 12.91 L10.54 13.85 L10.34 16.31 L6.86 16.31 L6.66 13.85 L5.02 12.91 L2.80 13.96 L1.06 10.94 L3.08 9.55 L3.08 7.65 L1.06 6.26 L2.80 3.24 L5.02 4.29 Z" fill="#a6a9ab" stroke="#a6a9ab" stroke-width="1.3" stroke-linejoin="round"/><circle cx="8.6" cy="8.6" r="2.8" fill="#fff"/></svg>
<div class="field" style="left:2100px;top:704px;width:422px;height:43px;border-radius:4px;"></div>
<span class="t" style="left:2115px;top:714px;font-size:17px;line-height:21px;transform:translateX(0.62px) scaleX(1.0136);color:#262a33;-webkit-text-stroke-width:0.2px;">Search all Jira projects</span>
<span class="t" style="left:2499px;top:719px;font-size:12px;line-height:15px;transform:translateX(0.00px) scaleX(1.0005);color:#262a33;font-family:'DejaVu Sans',sans-serif;-webkit-text-stroke-width:0.2px;">▾</span>
<div class="field" style="left:2100px;top:772px;width:422px;height:41.5px;border-radius:4px;"></div>
<span class="t" style="left:2115px;top:782px;font-size:17px;line-height:21px;transform:translateX(0.67px) scaleX(0.9727);color:#262a33;-webkit-text-stroke-width:0.2px;">SAL-3</span>
<span class="t" style="left:2499px;top:785px;font-size:12px;line-height:15px;transform:translateX(0.00px) scaleX(1.0005);color:#262a33;font-family:'DejaVu Sans',sans-serif;-webkit-text-stroke-width:0.2px;">▾</span>
<span class="t" style="left:2099px;top:833px;font-size:15px;line-height:19px;transform:translateX(0.99px) scaleX(1.0241);font-weight:700;color:#262a33;">Summary:</span>
<span class="t" style="left:2177px;top:833px;font-size:15px;line-height:19px;transform:translateX(0.68px) scaleX(1.0556);color:#262a33;-webkit-text-stroke-width:0.2px;">Field permissions</span>
<a class="t" style="left:2100px;top:865px;font-size:15px;line-height:19px;transform:translateX(0.40px) scaleX(1.0448);color:#337ab7;-webkit-text-stroke-width:0.2px;">View in Jira</a>
<span class="t" style="left:2099px;top:897px;font-size:15.5px;line-height:19px;transform:translateX(0.22px) scaleX(1.0471);color:#262a33;-webkit-text-stroke-width:0.2px;">Append validation items to ticket(s)</span>
<svg class="ic" style="left:2462px;top:896px;" width="45" height="23" viewBox="0 0 45 23" aria-hidden="true"><rect x="0" y="0" width="45" height="23" rx="11.5" fill="#68b775"/><circle cx="34.2" cy="10.6" r="7.9" fill="#fff"/></svg>
<span class="t" style="left:2099px;top:926px;font-size:15.5px;line-height:19px;transform:translateX(0.22px) scaleX(1.0484);color:#262a33;-webkit-text-stroke-width:0.2px;">Append deployment items to ticket(s)</span>
<svg class="ic" style="left:2462px;top:924.5px;" width="45" height="23" viewBox="0 0 45 23" aria-hidden="true"><rect x="0" y="0" width="45" height="23" rx="11.5" fill="#c9c9c9"/><circle cx="10.4" cy="10.6" r="7.9" fill="#fff"/></svg>
<span class="t" style="left:2098px;top:964px;font-size:15px;line-height:19px;transform:translateX(0.91px) scaleX(1.0374);font-weight:700;color:#262a33;">Associated tickets (1)</span>
<span class="t" style="left:2103px;top:1005px;font-size:16px;line-height:20px;transform:translateX(0.41px) scaleX(0.9553);color:#262a33;-webkit-text-stroke-width:0.2px;">SAL-3</span>
<span class="t" style="left:2176px;top:1005px;font-size:16px;line-height:20px;transform:translateX(0.35px) scaleX(1.0149);color:#262a33;-webkit-text-stroke-width:0.2px;">Holly Bracewell</span>
<div style="left:2379px;top:1005px;width:106px;height:28px;background:#4c9be8;border-radius:5px;"></div>
<span class="t" style="left:2384px;top:1009px;font-size:14px;line-height:18px;transform:translateX(0.50px) scaleX(1.0005);font-weight:700;color:#fff;font-family:'DejaVu Sans',sans-serif;">→</span>
<span class="t" style="left:2399px;top:1010px;font-size:13.5px;line-height:17px;transform:translateX(0.03px) scaleX(1.0023);color:#fff;-webkit-text-stroke-width:0.55px;">In Progress</span>
<span class="t" style="left:2471px;top:1013px;font-size:12px;line-height:15px;transform:translateX(0.90px) scaleX(1.0005);color:#fff;font-family:'DejaVu Sans',sans-serif;-webkit-text-stroke-width:0.2px;">▾</span>
<svg class="ic" style="left:2491.3px;top:1008.5px;" width="17.6" height="22.6" viewBox="0 0 17.6 22.6" aria-hidden="true"><rect x="5.4" y="0" width="6.8" height="3" rx="1.2" fill="#b54a47"/><rect x="0" y="1.8" width="17.6" height="2.8" rx="0.8" fill="#b54a47"/><path d="M1.6 6.2 H16 V20.2 Q16 22.5 13.7 22.5 H3.9 Q1.6 22.5 1.6 20.2 Z" fill="#b54a47"/></svg>
<div class="card" style="left:2086px;top:1066px;width:449px;height:52px;"></div>
<svg class="ic" style="left:2109px;top:1080.6px;" width="11.4" height="22.8" viewBox="0 0 11.4 22.8" aria-hidden="true"><path d="M0 0 L11.4 11.4 L0 22.8 Z" fill="#999"/></svg>
<svg class="ic" style="left:2140.4px;top:1076.6px;" width="31.5" height="31.5" viewBox="0 0 18 18" aria-hidden="true"><defs><linearGradient id="azg" x1="0" y1="1" x2="0" y2="0"><stop offset="0" stop-color="#2f6fd6"/><stop offset="1" stop-color="#5a9be6"/></linearGradient></defs><path d="M17 4v9.74l-4 3.28-6.2-2.26V17l-3.51-4.59 10.23.8V4.44zm-3.41.49L7.850 1v2.29L2.58 4.84 1 6.87v4.61l2.26 1V6.57z" fill="url(#azg)"/></svg>
<a class="t" style="left:2179px;top:1081px;font-size:18px;line-height:22px;transform:translateX(0.54px) scaleX(1.0404);color:#4a86c8;-webkit-text-stroke-width:0.3px;">Azure DevOps Work Items</a>
<svg class="ic" style="left:2504.7px;top:1082.2px;" width="17.2" height="17.2" viewBox="0 0 17.2 17.2" aria-hidden="true"><path d="M6.66 3.35 L6.86 0.89 L10.34 0.89 L10.54 3.35 L12.18 4.29 L14.40 3.24 L16.14 6.26 L14.12 7.65 L14.12 9.55 L16.14 10.94 L14.40 13.96 L12.18 12.91 L10.54 13.85 L10.34 16.31 L6.86 16.31 L6.66 13.85 L5.02 12.91 L2.80 13.96 L1.06 10.94 L3.08 9.55 L3.08 7.65 L1.06 6.26 L2.80 3.24 L5.02 4.29 Z" fill="#a6a9ab" stroke="#a6a9ab" stroke-width="1.3" stroke-linejoin="round"/><circle cx="8.6" cy="8.6" r="2.8" fill="#fff"/></svg>
<div class="card" style="left:2086px;top:1128px;width:449px;height:52px;"></div>
<svg class="ic" style="left:2109px;top:1143px;" width="11.4" height="22.8" viewBox="0 0 11.4 22.8" aria-hidden="true"><path d="M0 0 L11.4 11.4 L0 22.8 Z" fill="#999"/></svg>
<svg class="ic" style="left:2142px;top:1140.6px;" width="28" height="27" viewBox="0 0 28 27" aria-hidden="true"><defs><radialGradient id="asg" cx="14" cy="17" r="17" gradientUnits="userSpaceOnUse"><stop offset="0" stop-color="#ffb900"/><stop offset="0.6" stop-color="#f5755a"/><stop offset="1" stop-color="#ec5a7b"/></radialGradient></defs><g fill="url(#asg)"><circle cx="14" cy="6.2" r="6.1"/><circle cx="6.1" cy="20" r="6.1"/><circle cx="21.9" cy="20" r="6.1"/></g></svg>
<a class="t" style="left:2179px;top:1143px;font-size:18px;line-height:22px;transform:translateX(0.54px) scaleX(1.0359);color:#4a86c8;-webkit-text-stroke-width:0.3px;">Asana updates</a>
<svg class="ic" style="left:2504.7px;top:1144.2px;" width="17.2" height="17.2" viewBox="0 0 17.2 17.2" aria-hidden="true"><path d="M6.66 3.35 L6.86 0.89 L10.34 0.89 L10.54 3.35 L12.18 4.29 L14.40 3.24 L16.14 6.26 L14.12 7.65 L14.12 9.55 L16.14 10.94 L14.40 13.96 L12.18 12.91 L10.54 13.85 L10.34 16.31 L6.86 16.31 L6.66 13.85 L5.02 12.91 L2.80 13.96 L1.06 10.94 L3.08 9.55 L3.08 7.65 L1.06 6.26 L2.80 3.24 L5.02 4.29 Z" fill="#a6a9ab" stroke="#a6a9ab" stroke-width="1.3" stroke-linejoin="round"/><circle cx="8.6" cy="8.6" r="2.8" fill="#fff"/></svg>
</aside>
<header>
<div style="left:0px;top:70px;width:2560px;height:114px;background:#fff;border-bottom:1px solid #dcdcdc;"></div>
<h1 class="t" style="left:19px;top:87px;font-size:30px;line-height:38px;transform:translateX(0.03px) scaleX(1.0514);color:#3d424c;">Summary of items to deploy</h1>
<svg class="ic" style="left:25px;top:146px;" width="30" height="20" viewBox="0 0 30 20" aria-hidden="true"><g fill="#2a65ad"><circle cx="15" cy="8.6" r="8.6"/><circle cx="6.6" cy="13.3" r="6.6"/><circle cx="23.6" cy="13.6" r="6.2"/><rect x="6.6" y="11" width="17" height="8.8"/></g><text x="15.6" y="16.2" text-anchor="middle" font-family="Liberation Sans, sans-serif" font-weight="700" font-size="12.5" fill="#fff">D</text></svg>
<span class="t" style="left:60px;top:144px;font-size:18px;line-height:22px;transform:translateX(0.17px) scaleX(1.0251);color:#2b2e3a;-webkit-text-stroke-width:0.2px;">Develop (develop@gearset.com)</span>
<svg class="ic" style="left:352.6px;top:147.5px;" width="23" height="17" viewBox="0 0 23 17" aria-hidden="true"><path d="M0.8 8.5 L21 8.5 M13 0.9 L21 8.5 L13 16.1" fill="none" stroke="#2b2e3a" stroke-width="2.2"/></svg>
<svg class="ic" style="left:398px;top:146px;" width="30" height="20" viewBox="0 0 30 20" aria-hidden="true"><g fill="#2a65ad"><circle cx="15" cy="8.6" r="8.6"/><circle cx="6.6" cy="13.3" r="6.6"/><circle cx="23.6" cy="13.6" r="6.2"/><rect x="6.6" y="11" width="17" height="8.8"/></g><text x="15.6" y="16.2" text-anchor="middle" font-family="Liberation Sans, sans-serif" font-weight="700" font-size="12.5" fill="#fff">D</text></svg>
<span class="t" style="left:433px;top:144px;font-size:18px;line-height:22px;transform:translateX(0.16px) scaleX(1.0308);color:#2b2e3a;-webkit-text-stroke-width:0.2px;">Production (live@gearset.com)</span>
<span class="t" style="left:1511px;top:116px;font-size:18.5px;line-height:23px;transform:translateX(0.28px) scaleX(0.9663);color:#262a33;-webkit-text-stroke-width:0.2px;">TOTAL ITEMS:</span>
<span class="t" style="left:1638px;top:111px;font-size:24px;line-height:30px;transform:translateX(0.82px) scaleX(1.0632);font-weight:700;color:#e5953a;">26</span>
<span class="t" style="left:1768px;top:116px;font-size:18.5px;line-height:23px;transform:translateX(0.76px) scaleX(0.9416);color:#262a33;-webkit-text-stroke-width:0.2px;">CHANGED:</span>
<span class="t" style="left:1867px;top:111px;font-size:24px;line-height:30px;transform:translateX(0.52px) scaleX(1.1832);font-weight:700;color:#e5953a;">0</span>
<span class="t" style="left:1984px;top:116px;font-size:18.5px;line-height:23px;transform:translateX(0.27px) scaleX(0.9378);color:#262a33;-webkit-text-stroke-width:0.2px;">NEW:</span>
<span class="t" style="left:2036px;top:111px;font-size:24px;line-height:30px;transform:translateX(0.11px) scaleX(1.0859);font-weight:700;color:#e5953a;">6</span>
<span class="t" style="left:2151px;top:116px;font-size:18.5px;line-height:23px;transform:translateX(0.79px) scaleX(0.9224);color:#262a33;-webkit-text-stroke-width:0.2px;">DELETED:</span>
<span class="t" style="left:2242px;top:111px;font-size:24px;line-height:30px;transform:translateX(0.06px) scaleX(1.1390);font-weight:700;color:#e5953a;">0</span>
<span class="t" style="left:2358px;top:116px;font-size:18.5px;line-height:23px;transform:translateX(0.26px) scaleX(0.9410);color:#262a33;-webkit-text-stroke-width:0.2px;">NO DIFFERENCE:</span>
<span class="t" style="left:2511px;top:111px;font-size:24px;line-height:30px;transform:translateX(0.78px) scaleX(1.1076);font-weight:700;color:#e5953a;">20</span>
</header>
<nav>
<div style="left:0px;top:0px;width:2560px;height:70px;background:#2c303b;"></div>
<svg class="ic" style="left:16px;top:25.8px;" width="25" height="18" viewBox="0 0 25 18" aria-hidden="true"><rect x="0" y="0" width="25" height="3" rx="1.2" fill="#fff"/><rect x="0" y="7.5" width="25" height="3" rx="1.2" fill="#fff"/><rect x="0" y="15" width="25" height="3" rx="1.2" fill="#fff"/></svg>
<span class="t" style="left:55px;top:25px;font-size:16px;line-height:20px;transform:translateX(0.09px) scaleX(1.0107);font-weight:700;color:#fff;">METADATA DEPLOYMENTS</span>
<div style="left:350px;top:13px;width:1px;height:44px;background:#b9bbc0;"></div>
<a class="t" style="left:695px;top:25px;font-size:16px;line-height:20px;transform:translateX(0.54px) scaleX(0.9164);font-weight:700;color:#fff;">COMPARE AND DEPLOY</a>
<a class="t" style="left:929px;top:25px;font-size:16px;line-height:20px;transform:translateX(0.49px) scaleX(0.9480);font-weight:700;color:#d3d4d7;">SAVED COMPARISON PAIRS</a>
<a class="t" style="left:1197px;top:25px;font-size:16px;line-height:20px;transform:translateX(0.18px) scaleX(0.9287);font-weight:700;color:#d3d4d7;">DRAFT DEPLOYMENTS</a>
<a class="t" style="left:1425px;top:25px;font-size:16px;line-height:20px;transform:translateX(0.43px) scaleX(0.9215);font-weight:700;color:#d3d4d7;">VALIDATED PACKAGES</a>
<a class="t" style="left:1654px;top:25px;font-size:16px;line-height:20px;transform:translateX(0.17px) scaleX(0.9436);font-weight:700;color:#d3d4d7;">DEPLOYMENT HISTORY</a>
<a class="t" style="left:1890px;top:25px;font-size:16px;line-height:20px;transform:translateX(0.50px) scaleX(0.9651);font-weight:700;color:#d3d4d7;">COMPARISON HISTORY</a>
<div style="left:695px;top:45px;width:175px;height:2px;background:#eba642;"></div>
<svg class="ic" style="left:2431.2px;top:12.5px;" width="24" height="44" viewBox="0 0 24 44" aria-hidden="true"><path d="M11.9 0.2 L16 6.1 L7.8 6.1 Z" fill="#5fdcf8"/><path d="M5.6 8.8 L18.2 8.8 C22.2 17 21.6 31 15.4 41.6 Q11.9 44.6 8.4 41.6 C2.2 31 1.6 17 5.6 8.8 Z" fill="#5fdcf8" stroke="#17364e" stroke-width="1.1"/><circle cx="11.9" cy="18.1" r="3.9" fill="#5fdcf8" stroke="#17364e" stroke-width="2.2"/><path d="M0.2 43.2 L3.6 37.3 L6.3 43.2 Z" fill="#5fdcf8"/><path d="M17.5 43.2 L20.3 37.3 L23.7 43.2 Z" fill="#5fdcf8"/></svg>
<svg class="ic" style="left:2481px;top:12.5px;" width="43" height="44" viewBox="0 0 43 44" aria-hidden="true"><defs><clipPath id="lgT"><rect x="0" y="0" width="43" height="21.9"/></clipPath><clipPath id="lgB"><rect x="0" y="21.9" width="43" height="30"/></clipPath></defs><path d="M18.16 3.20 L19.09 0.33 L23.91 0.33 L24.84 3.20 L27.96 4.03 L30.20 2.02 L34.37 4.43 L33.74 7.37 L36.03 9.66 L38.97 9.03 L41.38 13.20 L39.37 15.44 L40.20 18.56 L43.07 19.49 L43.07 24.31 L40.20 25.24 L39.37 28.36 L41.38 30.60 L38.97 34.77 L36.03 34.14 L33.74 36.43 L34.37 39.37 L30.20 41.78 L27.96 39.77 L24.84 40.60 L23.91 43.47 L19.09 43.47 L18.16 40.60 L15.04 39.77 L12.80 41.78 L8.63 39.37 L9.26 36.43 L6.97 34.14 L4.03 34.77 L1.62 30.60 L3.63 28.36 L2.80 25.24 L-0.07 24.31 L-0.07 19.49 L2.80 18.56 L3.63 15.44 L1.62 13.20 L4.03 9.03 L6.97 9.66 L9.26 7.37 L8.63 4.43 L12.80 2.02 L15.04 4.03 Z" fill="#f3b44d" clip-path="url(#lgT)"/><path d="M18.16 3.20 L19.09 0.33 L23.91 0.33 L24.84 3.20 L27.96 4.03 L30.20 2.02 L34.37 4.43 L33.74 7.37 L36.03 9.66 L38.97 9.03 L41.38 13.20 L39.37 15.44 L40.20 18.56 L43.07 19.49 L43.07 24.31 L40.20 25.24 L39.37 28.36 L41.38 30.60 L38.97 34.77 L36.03 34.14 L33.74 36.43 L34.37 39.37 L30.20 41.78 L27.96 39.77 L24.84 40.60 L23.91 43.47 L19.09 43.47 L18.16 40.60 L15.04 39.77 L12.80 41.78 L8.63 39.37 L9.26 36.43 L6.97 34.14 L4.03 34.77 L1.62 30.60 L3.63 28.36 L2.80 25.24 L-0.07 24.31 L-0.07 19.49 L2.80 18.56 L3.63 15.44 L1.62 13.20 L4.03 9.03 L6.97 9.66 L9.26 7.37 L8.63 4.43 L12.80 2.02 L15.04 4.03 Z" fill="#e0703f" clip-path="url(#lgB)"/><rect x="0" y="20.0" width="43" height="3.8" fill="#2c303b"/><path d="M20.9 29.9 L15.1 44.9" stroke="#2c303b" stroke-width="3.4"/><circle cx="21.5" cy="21.9" r="13.2" fill="#2c303b"/><circle cx="21.5" cy="21.9" r="7.6" fill="#4a9de0"/></svg>
<svg class="ic" style="left:2531px;top:34px;" width="10" height="5.4" viewBox="0 0 10 5.4" aria-hidden="true"><path d="M0 0 L10 0 L5 5.2 Z" fill="#fff"/></svg>
</nav>
<footer>
<div style="left:0px;top:1172.5px;width:2560px;height:61.5px;background:#fff;"></div>
<div style="left:2060px;top:1172px;width:500px;height:1px;background:#e2e2e2;"></div>
<div class="btn" style="left:19px;top:1183px;width:253px;height:47px;"></div>
<svg class="ic" style="left:35px;top:1197.6px;" width="23" height="17" viewBox="0 0 23 17" aria-hidden="true"><path d="M22.4 8.4 L1.2 8.4 M9.2 0.6 L1.2 8.4 L9.2 16.2" fill="none" stroke="#2b2e3a" stroke-width="2.3"/></svg>
<span class="t" style="left:69px;top:1196px;font-size:18px;line-height:22px;transform:translateX(0.65px) scaleX(1.0359);color:#2b2e3a;-webkit-text-stroke-width:0.2px;">Back to comparison</span>
<div class="btn" style="left:1496px;top:1183px;width:262px;height:47px;"></div>
<svg class="ic" style="left:1509.1px;top:1192.1px;" width="28" height="28" viewBox="0 0 28 28" aria-hidden="true"><path d="M0 3 Q0 0 3 0 L10.5 0 Q12.3 0 13.2 1.6 L14.4 3.6 L25 3.6 Q28 3.6 28 6.6 L28 25 Q28 28 25 28 L3 28 Q0 28 0 25 Z" fill="#f3ae3d"/><text x="4.9" y="14.8" font-family="Liberation Sans, sans-serif" font-weight="700" font-size="9.2" style="letter-spacing:1.55px" fill="#fff">ZIP</text><path d="M12.4 18.8 H16 V21.4 H18.2 L14.2 25.2 L10.2 21.4 H12.4 Z" fill="#fad9a2"/></svg>
<span class="t" style="left:1546px;top:1196px;font-size:18px;line-height:22px;transform:translateX(0.66px) scaleX(1.0312);color:#2b2e3a;-webkit-text-stroke-width:0.2px;">Download package...</span>
<div class="btn" style="left:1769px;top:1183px;width:159px;height:47px;"></div>
<svg class="ic" style="left:1778.4px;top:1191.3px;" width="25.2" height="29.6" viewBox="0 0 25.2 29.6" aria-hidden="true"><path d="M0 3 Q0 0 3 0 L18.2 0 L25.2 7 L25.2 26.6 Q25.2 29.6 22.2 29.6 L3 29.6 Q0 29.6 0 26.6 Z" fill="#4b9b5e"/><path d="M18.2 0 L25.2 7 L18.2 7 Z" fill="#2f7a44"/><text x="2.6" y="17" font-family="Liberation Sans, sans-serif" font-weight="700" font-size="9.4" style="letter-spacing:0.75px" fill="#fff">CSV</text><path d="M10.8 20.6 H14.6 V23.4 H16.8 L12.7 27.4 L8.6 23.4 H10.8 Z" fill="#9ed0aa"/></svg>
<span class="t" style="left:1820px;top:1196px;font-size:18px;line-height:22px;transform:translateX(0.15px) scaleX(1.0367);color:#2b2e3a;-webkit-text-stroke-width:0.2px;">Export...</span>
<div class="dark" style="left:1945px;top:1183px;width:195px;height:47px;"></div>
<div style="left:2100px;top:1183px;width:1px;height:47px;background:rgba(255,255,255,.28);"></div>
<span class="t" style="left:1973px;top:1196px;font-size:18px;line-height:22px;transform:translateX(0.79px) scaleX(0.9448);color:#fff;-webkit-text-stroke-width:0.4px;">DEPLOY NOW</span>
<svg class="ic" style="left:2114.3px;top:1205px;" width="10" height="5.6" viewBox="0 0 10 5.6" aria-hidden="true"><path d="M0 5.6 L5 0 L10 5.6 Z" fill="#fff"/></svg>
<div class="dark" style="left:2157px;top:1183px;width:287px;height:47px;"></div>
<div style="left:2404px;top:1183px;width:1px;height:47px;background:rgba(255,255,255,.28);"></div>
<span class="t" style="left:2186px;top:1196px;font-size:18px;line-height:22px;transform:translateX(0.42px) scaleX(0.9656);color:#fff;-webkit-text-stroke-width:0.4px;">VALIDATE DEPLOYMENT</span>
<svg class="ic" style="left:2418px;top:1205px;" width="10" height="5.6" viewBox="0 0 10 5.6" aria-hidden="true"><path d="M0 5.6 L5 0 L10 5.6 Z" fill="#fff"/></svg>
<svg class="ic" style="left:2475px;top:1162px;filter:drop-shadow(0 1px 6px rgba(0,0,0,.06)) drop-shadow(0 2px 24px rgba(0,0,0,.14));z-index:20;" width="60" height="60" viewBox="0 0 60 60" aria-hidden="true"><circle cx="30" cy="30" r="30" fill="#3574d8"/><path d="M20.6 15.6 H39.8 Q43 15.6 43 18.8 V45.4 L36.4 41.8 H20.6 Q17.4 41.8 17.4 38.6 V18.8 Q17.4 15.6 20.6 15.6 Z" fill="#fff"/><path d="M22.2 33.8 Q30 38.4 38.2 33.8" fill="none" stroke="#3574d8" stroke-width="1.9" stroke-linecap="round"/></svg>
</footer>
</div>
</body>
</html>
